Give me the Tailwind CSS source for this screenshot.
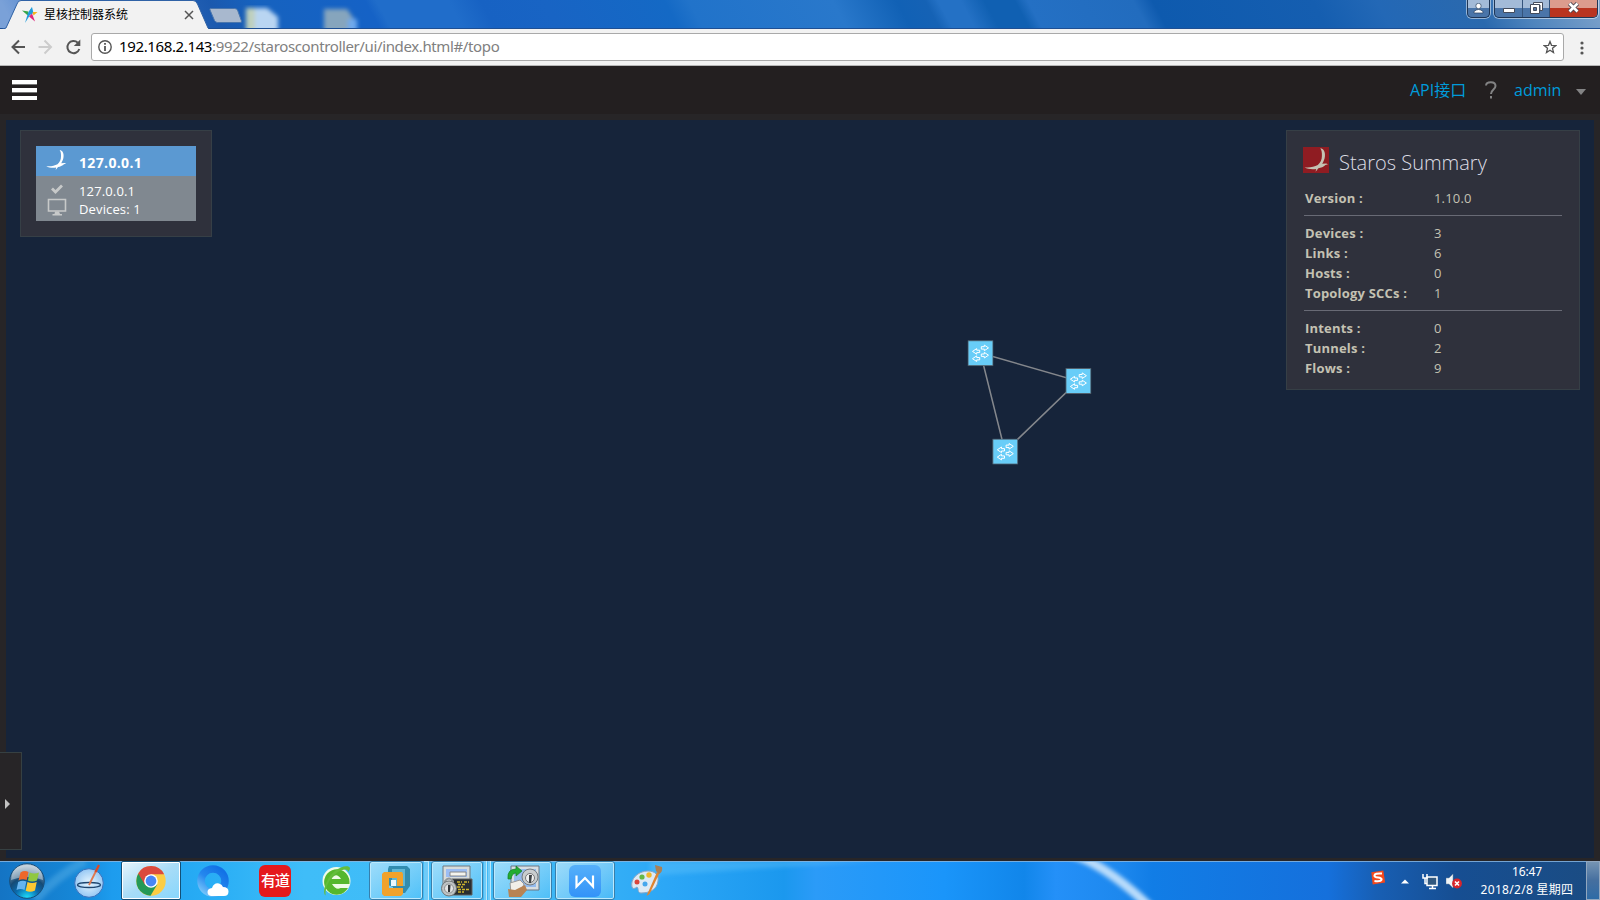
<!DOCTYPE html>
<html lang="zh-CN">
<head>
<meta charset="utf-8">
<title>星核控制器系统</title>
<script src="https://cdn.jsdelivr.net/npm/@tailwindcss/browser@4"></script>
</head>
<body class="w-[1600px] h-[900px] overflow-hidden flex flex-col bg-[#272526] font-['Open_Sans','Noto_Sans_CJK_SC',sans-serif]">
<svg class="hidden">
  <defs>
    <symbol id="bird" viewBox="0 0 26 26">
      <path d="M17.3 1.2C20.6 1.6 22.5 5 21.9 9.4C21.7 12 20.4 14.6 19.2 16.700L23.2 16.5L25 17.2L22.4 18.1C20.6 20 18 21 15.4 21.3L12.6 24.7L13.2 22C9 22.500 4.500 22.2 1.500 20.3C6.500 20.900 11 20 14.8 18.1C17.600 15.400 18.900 12.600 18.900 9C19.100 5.800 18.600 3 17.300 1.200Z"/>
    </symbol>
    <symbol id="switch" viewBox="0 0 26 26">
      <rect x=".5" y=".5" width="25" height="25" fill="#68cdf8" stroke="#515f6b"/>
      <g fill="none" stroke="#fff" stroke-width="1">
        <path d="M13.800 6.500H16.800V4.900L21 7.700L16.800 10.500V8.900H13.800Z"/>
        <path d="M13.800 13.800H16.800V12.200L21 15L16.800 17.800V16.200H13.800Z"/>
        <path d="M12.200 10H9.200V8.400L5 11.200L9.200 14V12.400H12.200Z"/>
        <path d="M12.200 17.300H9.200V15.700L5 18.500L9.200 21.300V19.700H12.200Z"/>
      </g>
    </symbol>
  </defs>
</svg>

<!-- tab strip -->
<header class="relative h-[29px] shrink-0 flex justify-between bg-linear-to-r from-[#6f9ad4] to-[#7a9fc9]">
  <svg class="absolute inset-0" width="1600" height="29">
    <defs>
      <linearGradient id="sky" gradientUnits="userSpaceOnUse" x1="0" y1="0" x2="1600" y2="0" gradientTransform="skewX(28)"><stop offset="0" stop-color="#7aa1d8"/><stop offset=".03" stop-color="#4c82cc"/><stop offset=".13" stop-color="#1b59ae"/><stop offset=".16" stop-color="#1662bf"/><stop offset=".228" stop-color="#1562c6"/><stop offset=".235" stop-color="#206dca"/><stop offset=".28" stop-color="#206dca"/><stop offset=".3" stop-color="#1762c3"/><stop offset=".34" stop-color="#1864c4"/><stop offset=".415" stop-color="#1469c5"/><stop offset=".43" stop-color="#2173ca"/><stop offset=".52" stop-color="#2978cb"/><stop offset=".56" stop-color="#1161b5"/><stop offset=".578" stop-color="#1562b5"/><stop offset=".586" stop-color="#2471c5"/><stop offset=".6" stop-color="#2471c5"/><stop offset=".615" stop-color="#1060b2"/><stop offset=".634" stop-color="#1060b2"/><stop offset=".642" stop-color="#2470c4"/><stop offset=".708" stop-color="#226cbe"/><stop offset=".72" stop-color="#0e5aae"/><stop offset=".82" stop-color="#155eb0"/><stop offset=".86" stop-color="#2368b6"/><stop offset=".92" stop-color="#2a69ae"/><stop offset=".95" stop-color="#4e84bd"/><stop offset="1" stop-color="#7da2cb"/></linearGradient>
      <filter id="soft"><feGaussianBlur stdDeviation="2"/></filter>
    </defs>
    <path d="M0 0H1600V29H0Z" fill="url(#sky)"/>
    <g filter="url(#soft)">
      <path d="M248 8H267L278 17V34H248Z" fill="#b9d5f2"/><path d="M246 8H255V34H246Z" fill="#bfd0bd"/>
      <path d="M324 9H347L354 19V34H324Z" fill="#86a5bd"/><path d="M348 19H357V34H348Z" fill="#6ea9ec"/>
    </g>
    <path d="M0 28.500H1600" stroke="#1e4f93"/>
    <path d="M0 30L6 28L17 4Q18 .5 21 .5H193Q196 .5 197.500 4L208 28L210 30Z" fill="#f2f2f2" stroke="#2f62a6"/>
    <path d="M209 8.500H233Q235 8.500 236 10L240 21Q240.500 22.500 238.500 22.500H216Q214 22.500 213 20.500L208.500 10Q208 8.500 209 8.500Z" transform="translate(1.500 0)" fill="#a8b8ce" stroke="#4a76ad"/>
  </svg>
  <div class="relative flex items-center h-[29px] pl-[22px] w-[208px]">
    <svg width="16" height="16" viewBox="0 0 16 16"><path d="M0 3.500L6.500 4.500L5.800 8.500Z" fill="#37a54a"/><path d="M10 0L7 4.500L6 10Z" fill="#21a9d8"/><path d="M10 0L11.500 6L8 8L3 16L6 6Z" fill="#1f9bdc"/><path d="M15.500 5L11.500 8.500L10.500 5Z" fill="#f6b31c"/><path d="M10 6.500L13 14.500L7 9.500Z" fill="#e0267e"/></svg>
    <span class="ml-[6px] text-[12px] leading-[16px] text-black w-[88px]">星核控制器系统</span>
    <svg class="ml-[52px] mt-px" width="10" height="10"><path d="M1 1L9 9M9 1L1 9" stroke="#555" stroke-width="1.500"/></svg>
  </div>
  <div class="relative flex gap-[4px] pr-[2px]">
    <div class="w-[23px] h-[18px] border border-t-0 border-[#1f3656] rounded-b-[5px] ring-1 ring-white/50 bg-linear-to-b from-[#a3bbd8] from-45% to-[#4a75a9] to-50% flex justify-center pt-[3px]">
      <svg width="11" height="11"><circle cx="5.500" cy="3" r="2.700" fill="#fff" stroke="#28405f" stroke-width=".7"/><path d="M1 10V8.500Q5.500 4.500 10 8.500V10Z" fill="#fff" stroke="#28405f" stroke-width=".7"/></svg>
    </div>
    <div class="flex h-[18px] border border-t-0 border-[#1f3656] rounded-b-[5px] ring-1 ring-white/50 overflow-hidden bg-linear-to-b from-[#a3bbd8] from-45% to-[#4a75a9] to-50%">
      <div class="w-[28px] border-r border-[#34547c] flex justify-center pt-[8px]"><svg width="12" height="5"><path d="M.5 .5H11.500V4.500H.5Z" fill="#fff" stroke="#444c5c"/></svg></div>
      <div class="w-[27px] border-r border-[#34547c] flex justify-center pt-[2px]"><svg width="13" height="12"><path d="M3.500 .5H12.500V8.500H10V3H3.500Z" fill="#fff" stroke="#444c5c"/><path d="M.5 2.500H9.500V11.500H.5Z" fill="#fff" stroke="#444c5c"/><path d="M3.500 5.500H6.500V8.500H3.500Z" fill="#5474a0" stroke="#444c5c"/></svg></div>
      <div class="w-[47px] bg-linear-to-b from-[#dc9c8e] from-45% to-[#b93420] to-50% flex justify-center pt-[2px]"><svg width="13" height="11"><path d="M2.500 1.500L10.500 9.500M10.500 1.500L2.500 9.500" stroke="#4a4652" stroke-width="4.400"/><path d="M2.500 1.500L10.500 9.500M10.500 1.500L2.500 9.500" stroke="#fff" stroke-width="2.600"/></svg></div>
    </div>
  </div>
</header>

<!-- address bar -->
<div class="h-[37px] shrink-0 bg-[#f2f2f2] border-b border-[#b6b6b6] flex items-center pl-[10px]">
  <svg class="shrink-0" width="71" height="18" viewBox="0 0 71 18" fill="none" stroke-width="2"><path d="M15 9H2.500M9 2.500L2.500 9L9 15.500" stroke="#555"/><path d="M28.500 9H41M34.500 2.500L41 9L34.500 15.500" stroke="#ccc"/><path d="M69.300 11A6.100 6.100 0 1 1 67.800 4.700" stroke="#555"/><path d="M70.300 1.500V8H63.800Z" fill="#555"/></svg>
  <div class="ml-[10px] w-[1473px] shrink-0 h-[28px] bg-white border border-[#a9a9a9] rounded-[3px] flex items-center pl-[6px] pr-[6px]">
    <svg width="14" height="14" fill="none"><circle cx="7" cy="7" r="6.200" stroke="#555" stroke-width="1.400"/><path d="M7 6V11M7 3V4.800" stroke="#555" stroke-width="1.800"/></svg>
    <span class="ml-[7px] -mt-[2px] text-[15px] leading-[24px] text-[#808080] font-['Noto_Sans'] whitespace-nowrap tracking-[-0.370px]"><span class="text-black">192.168.2.143</span>:9922/staroscontroller/ui/index.html#/topo</span>
    <svg class="ml-auto" width="14" height="14" fill="none" stroke="#555" stroke-width="1.300"><path d="M7 1.500L8.500 5.300L12.800 5.600L9.500 8.300L10.500 12.500L7 10.200L3.500 12.500L4.500 8.300L1.200 5.600L5.500 5.300Z"/></svg>
  </div>
  <svg class="ml-[16px] mt-px" width="4" height="14" fill="#555"><circle cx="2" cy="2" r="1.600"/><circle cx="2" cy="7" r="1.600"/><circle cx="2" cy="12" r="1.600"/></svg>
</div>

<!-- application masthead -->
<nav class="h-[48px] shrink-0 bg-[#231f20] flex items-center pl-[12px] pr-[14px]">
  <div class="w-[25px] h-[20px] flex flex-col justify-between">
    <i class="h-[4px] bg-white shadow-[0_1px_0_#777]"></i><i class="h-[4px] bg-white shadow-[0_1px_0_#777]"></i><i class="h-[4px] bg-white"></i>
  </div>
  <div class="ml-auto flex items-center text-[16px] leading-[24px] text-[#009bdb]">
    <span class="w-[56px] whitespace-nowrap">API接口</span>
    <svg class="ml-[19px]" width="12" height="18" fill="none" stroke="#838384" stroke-width="2"><path d="M1 4.500C1.500 0 10.500 0 10.500 5C10.500 8.500 6 8.500 6 13M6 15V17.500"/></svg>
    <span class="ml-[17px] w-[48px]">admin</span>
    <svg class="ml-[14px] mt-[3px]" width="10" height="6"><path d="M0 0H10L5 6Z" fill="#838384"/></svg>
  </div>
</nav>

<!-- topology view -->
<main class="relative flex-1 px-[6px] pt-[6px] pb-[3px] bg-[#272527]">
  <div class="relative h-full bg-[#16243a] flex justify-between items-start px-[14px] pt-[10px]">
    <svg class="absolute left-0 top-0" width="1588" height="738" viewBox="6 120 1588 738">
      <path d="M980.500 353L1078 381L1005 451.500Z" fill="none" stroke="#84878c" stroke-width="1.500"/>
      <use href="#switch" x="967.500" y="340.200" width="26" height="26"/>
      <use href="#switch" x="1065.400" y="368" width="26" height="26"/>
      <use href="#switch" x="992.300" y="438.600" width="26" height="26"/>
    </svg>
    <section class="relative w-[192px] h-[107px] bg-[#2f313c] border border-[#363f46] p-[15px]">
      <div class="h-[30px] bg-[#5b99d2] flex items-center pl-[9px]">
        <svg class="-mt-[3px]" width="22" height="22" fill="#fff"><use href="#bird" width="22" height="22"/></svg>
        <b class="ml-[12px] mt-[3px] text-[14px] leading-[20px] text-white tracking-[0.350px]">127.0.0.1</b>
      </div>
      <div class="h-[45px] bg-[#808890] flex pl-[11px] pt-[6px]">
        <svg width="20" height="36" fill="none"><path d="M5 6.500L8.500 10L15 3.500" stroke="#c7c9c9" stroke-width="2.800"/><path d="M1.500 17.500H18.500V29H1.500Z" stroke="#c7c9c9" stroke-width="1.600"/><path d="M8 29.500H12L13 32H15V33.500H5.500V32H7.500Z" fill="#c7c9c9"/></svg>
        <div class="ml-[12px] text-[13px] leading-[18px] text-white tracking-[0.140px]"><p>127.0.0.1</p><p>Devices: 1</p></div>
      </div>
    </section>
    <section class="relative w-[294px] h-[260px] bg-[#2f313c] border border-[#363f46] pl-[17px] pr-[17px] pt-[14px] text-[13px] leading-[20px] text-[#c4c2b3] tracking-[0.190px]">
      <div class="flex h-[38px]">
        <svg class="mt-[2px] -ml-px" width="26" height="26"><path d="M0 0H26V26H0Z" fill="#8f1c22"/><use href="#bird" width="26" height="26" fill="#c4c2b3"/></svg>
        <h2 class="ml-[10px] mt-[3px] text-[20px] leading-[30px] font-light text-[#dddde5] whitespace-nowrap tracking-normal">Staros Summary</h2>
      </div>
      <dl class="grid grid-cols-[129px_1fr] pl-px pt-[5px] h-[32px]"><dt class="font-bold">Version :</dt><dd>1.10.0</dd></dl>
      <hr class="border-[#686a75]">
      <dl class="grid grid-cols-[129px_1fr] pl-px pt-[7px] h-[94px] content-start"><dt class="font-bold">Devices :</dt><dd>3</dd><dt class="font-bold">Links :</dt><dd>6</dd><dt class="font-bold">Hosts :</dt><dd>0</dd><dt class="font-bold">Topology SCCs :</dt><dd>1</dd></dl>
      <hr class="border-[#686a75]">
      <dl class="grid grid-cols-[129px_1fr] pl-px pt-[7px]"><dt class="font-bold">Intents :</dt><dd>0</dd><dt class="font-bold">Tunnels :</dt><dd>2</dd><dt class="font-bold">Flows :</dt><dd>9</dd></dl>
    </section>
  </div>
  <div class="absolute left-0 top-[638px] w-[22px] h-[98px] bg-[#272527] border border-l-0 border-[#364042] flex items-center pl-[5px] pt-[6px]">
    <svg width="5" height="10"><path d="M0 0L5 5L0 10Z" fill="#c2c2c2"/></svg>
  </div>
</main>

<!-- desktop taskbar -->
<footer class="relative h-[39px] shrink-0 flex items-center text-white">
  <svg class="absolute inset-0" width="1600" height="39">
    <defs>
      <linearGradient id="tb"><stop offset="0" stop-color="#1474c4"/><stop offset=".05" stop-color="#1688d8"/><stop offset=".07" stop-color="#1d9cee"/><stop offset=".13" stop-color="#28adf5"/><stop offset=".19" stop-color="#3fbdf8"/><stop offset=".33" stop-color="#40baf6"/><stop offset=".42" stop-color="#2ba6f6"/><stop offset=".49" stop-color="#1b98ee"/><stop offset=".51" stop-color="#2b9bf8"/><stop offset=".59" stop-color="#1a95fa"/><stop offset=".64" stop-color="#1186ea"/><stop offset=".66" stop-color="#2490f8"/><stop offset=".7" stop-color="#1d88ee"/><stop offset=".72" stop-color="#117de6"/><stop offset=".83" stop-color="#1570dc"/><stop offset=".86" stop-color="#185fb4"/><stop offset=".91" stop-color="#164e92"/><stop offset="1" stop-color="#1b4c82"/></linearGradient>
      <radialGradient id="orb" cx=".5" cy="1" r="1"><stop offset="0" stop-color="#1ee4ff"/><stop offset=".35" stop-color="#0a6caf"/><stop offset=".6" stop-color="#154b76"/><stop offset="1" stop-color="#b8c9d6"/></radialGradient>
      <radialGradient id="glass"><stop offset="0" stop-color="#e8f7ff"/><stop offset="1" stop-color="#97c8f4"/></radialGradient>
      <linearGradient id="ring" x1="0" y1="1" x2=".8" y2="0"><stop offset="0" stop-color="#7cc9fb"/><stop offset=".5" stop-color="#2487ee"/><stop offset="1" stop-color="#1272e6"/></linearGradient>
      <linearGradient id="wps" x2="0" y2="1"><stop offset="0" stop-color="#55b0fa"/><stop offset="1" stop-color="#3393f8"/></linearGradient>
    </defs>
    <path d="M0 0H1600V39H0Z" fill="url(#tb)"/>
    <path d="M650 30L660 14L880 0H650Z" fill="#64c4fb" opacity=".4" filter="url(#soft)"/>
    <path d="M35 39Q55 16 85 0" fill="none" stroke="#70c0ee" stroke-width="9" opacity=".35" filter="url(#soft)"/>
    <path d="M1068 -8Q1104 2 1150 46" fill="none" stroke="#b9dcfb" stroke-width="9" filter="url(#soft)"/>
    <path d="M0 .5H1600" stroke="#86b4df" opacity=".85"/>
  </svg>
  <div class="relative flex items-center w-[58px] pl-[9px]">
    <svg width="36" height="36"><circle cx="18" cy="18" r="17.300" fill="url(#orb)" stroke="#174d79"/><path d="M2 17Q3 2 18 2T34 17Q18 11 2 17Z" fill="#fff" opacity=".4"/><path d="M11.500 9.500Q15.500 7 19.500 9L17.700 17Q13.500 15.500 9.500 17.500Z" fill="#ed672b"/><path d="M20.700 9.500Q25 11.500 30 9.500L28 17.500Q23 19.500 18.900 17.500Z" fill="#90c840"/><path d="M9.200 19Q13.500 17 17.400 18.500L15.500 27Q11.500 25 7.500 27Z" fill="#66b4ef"/><path d="M18.500 19Q23 21 27.700 19L26 27.500Q21 30 16.700 27.700Z" fill="#fdc832"/></svg>
  </div>
  <div class="relative flex items-center h-[39px]">
    <div class="w-[62px] flex justify-center"><svg width="34" height="36"><circle cx="17" cy="20" r="14.300" fill="url(#glass)" stroke="#3d73bd"/><ellipse cx="17" cy="22" rx="11.500" ry="2.500" fill="none" stroke="#1e466f" stroke-width="1.300"/><path d="M26.500 3L17 22" stroke="#df7950" stroke-width="1.800"/><path d="M27 2L23.500 9" stroke="#d94a28" stroke-width="2.200"/></svg></div>
    <div class="w-[62px] h-[39px] flex pl-px"><div class="w-[60px] h-[39px] border border-[#135077] rounded-[2px] bg-linear-to-br from-[#e6f5fc] via-[#a7dcf7] to-[#86d6fc] shadow-[inset_0_0_0_1px_#fff] flex items-center justify-center">
      <svg width="30" height="30" viewBox="0 0 30 30"><circle cx="15" cy="15" r="14.700" fill="#fbcd44"/><path d="M15 15L2.200 7.800A14.700 14.700 0 0 0 14.500 29.700L21.200 18.500Z" fill="#239957"/><path d="M15 8.200H28.100A14.700 14.700 0 0 0 2.200 7.500L8.800 18.500Z" fill="#db4a3d"/><circle cx="15" cy="15" r="6.800" fill="#fff"/><circle cx="15" cy="15" r="5.400" fill="#4786f4"/></svg></div></div>
    <div class="w-[62px] flex justify-center"><svg width="32" height="32"><circle cx="16" cy="16" r="12" fill="none" stroke="url(#ring)" stroke-width="7.500"/><path d="M14 31Q10.500 30.500 10.500 27T15 23Q17 17.500 22 18.500Q25 19 26 22Q31.500 22 31.500 26.500Q31.500 31 27 31Z" fill="#fff"/></svg></div>
    <div class="w-[62px] flex justify-center"><div class="w-[32px] h-[32px] rounded-[6px] bg-[#e5191c] text-[15px] leading-[31px] font-medium tracking-[-1px] text-center whitespace-nowrap">有道</div></div>
    <div class="w-[62px] flex justify-center"><svg width="32" height="32"><circle cx="15.500" cy="16" r="14" fill="#eefbe9"/><path d="M28.500 16.500A12.700 12.700 0 1 0 27 23H19.500Q15 25.500 11 19H28.500ZM10.500 14Q15 6.500 20 14Z" fill="#55b72e" fill-rule="evenodd"/><path d="M4.500 30.500C1 27 5 13 14 6C20 1 28 0 29 3C29 5 27.500 6.500 27 7C27 3.500 22 4 17 7C8 13 4 23 4.500 30.500Z" fill="#64bd3d"/></svg></div>
    <div class="w-[62px] flex justify-center gap-px">
      <div class="w-[54px] h-[39px] border border-[#377fac] rounded-[3px] bg-linear-to-br from-[#b7e5fb]/80 to-[#63c9fa]/40 shadow-[inset_0_0_0_1px_#bce9fd] flex items-center justify-center"><svg width="30" height="32"><path d="M8 1H26L29 4V21L24 28H12V22L7 20V4Z" fill="#318caf"/><path d="M11 4H24V21H11Z" fill="#5fb7d4"/><path d="M3 7H21L22 9V21H16V13H8V23H22V29L20 31H3L1 29V9Z" fill="#f0a22c"/><path d="M10 15H15V21H10Z" fill="#e9f7fd"/></svg></div>
      <div class="w-[5px] h-[39px] border-r border-t border-[#b9e8fc] bg-[#90d5f8]/60"></div>
    </div>
    <div class="w-[62px] flex pl-px gap-px">
      <div class="w-[52px] h-[39px] border border-[#377fac] rounded-[3px] bg-linear-to-br from-[#b7e5fb]/80 to-[#63c9fa]/40 shadow-[inset_0_0_0_1px_#bce9fd] flex items-center justify-center"><svg width="32" height="32"><path d="M2 1H29V25H2Z" fill="#d7dcdb" stroke="#6e7880"/><path d="M5 4H26V12H5Z" fill="#9bbdf3"/><path d="M9 7H25V11H9Z" fill="#f4f4ee" stroke="#888"/><path d="M11 14H31V30H11Z" fill="#292d30" stroke="#606260"/><path d="M16 17H21M23 17H28M17 19.500H25M16 22H22M17 24.500H28M17 27H23" stroke="#cdb52e" stroke-width="1.300" stroke-dasharray="3 1"/><path d="M4 19V16Q8 11 12 16V18" fill="none" stroke="#929799" stroke-width="2"/><circle cx="8" cy="23.500" r="7.500" fill="#bec3c4" stroke="#6f7576"/><circle cx="8" cy="23.500" r="4.500" fill="#e3e5e5" stroke="#8a8f90"/><path d="M7 20H9.500L9 27H7Z" fill="#303437"/></svg></div>
      <div class="w-[3px] h-[39px] border-r border-[#b9e8fc] bg-[#90d5f8]/60"></div><div class="w-[3px] h-[39px] border-r border-[#b9e8fc] bg-[#90d5f8]/60"></div>
    </div>
    <div class="w-[62px] flex pl-px"><div class="w-[59px] h-[39px] border border-[#377fac] rounded-[3px] bg-linear-to-br from-[#b7e5fb]/80 to-[#63c9fa]/40 shadow-[inset_0_0_0_1px_#bce9fd] flex items-center justify-center"><svg width="34" height="34"><path d="M5 2H33V26H5Z" fill="#d7dee2" stroke="#6b7683"/><path d="M8 5H30V23H8Z" fill="#94bbee"/><path d="M2 15Q1 5 10 5V2L16 7L10 12V9Q6 9 5 15Z" fill="#22ad31" stroke="#177d26" stroke-width=".7"/><circle cx="24" cy="13" r="8" fill="#c9cdcf" stroke="#747b80"/><circle cx="24" cy="14" r="4.500" fill="#eff0f0" stroke="#777"/><path d="M23 11H26L25 19H23Z" fill="#3e4245"/><path d="M4 19L14 16L18 20L15 27L5 29Z" fill="#f1eee9" stroke="#999"/><path d="M2 25L9 26L19 21L21 26L15 33H3Z" fill="#b88354"/></svg></div></div>
    <div class="w-[62px] flex pl-px"><div class="w-[60px] h-[39px] border border-[#377fac] rounded-[3px] bg-linear-to-br from-[#b7e5fb]/80 to-[#63c9fa]/40 shadow-[inset_0_0_0_1px_#bce9fd] flex items-center justify-center"><svg width="32" height="32"><rect width="32" height="32" rx="6" fill="url(#wps)"/><path d="M7.500 10.500V21.500L16 13L24 21.500V10.500" fill="none" stroke="#fff" stroke-width="2.200"/></svg></div></div>
    <div class="w-[62px] flex justify-center"><svg width="34" height="34"><path d="M2 23C0 15 8 7 18 7C25 7 29 11 28 17C27 26 19 29 11 29C7 29 9 24 7 23Q3 26 2 23Z" fill="#ddeaf5" stroke="#89a6c4"/><circle cx="7" cy="18" r="2.500" fill="#da463c"/><circle cx="12" cy="13" r="2.600" fill="#65b847"/><circle cx="19" cy="11" r="2.700" fill="#f1b82c"/><circle cx="15" cy="20" r="2.500" fill="#45a7ed"/><path d="M27 8L16.500 32L19.500 30L29.500 9Z" fill="#df8430"/><path d="M25 1L32 3Q33 8 29 10L26 7Z" fill="#aa8056"/></svg></div>
  </div>
  <div class="relative ml-auto flex items-center h-[39px]">
    <svg class="-mt-[6px]" width="16" height="17" viewBox="0 0 18 18"><path d="M1.500 3L15 1L17 14.500L3 17Z" fill="#f4481c"/><path d="M13.500 4.500Q5 4 5 7Q5 8.500 9 9Q13.500 9.500 13 11.500Q12 14 5 13" fill="none" stroke="#fff" stroke-width="2.300"/></svg>
    <svg class="ml-[15px] mt-px" width="8" height="5"><path d="M0 4.500L4 .5L8 4.500Z" fill="#fff"/></svg>
    <svg class="ml-[13px] mt-[1px]" width="16" height="17" fill="none"><path d="M5 4H15V12.500H5Z" fill="#31587f" stroke="#fff" stroke-width="1.500"/><path d="M7 15.500H14M10.500 13V15" stroke="#fff" stroke-width="1.500"/><path d="M1 1V5H5V1M3 5V10.500H5" stroke="#fff" stroke-width="1.500"/></svg>
    <svg class="ml-[8px] mt-[1px]" width="17" height="17"><path d="M0 5H3L7 1V15L3 11H0Z" fill="#f0f4f7" stroke="#738aa2" stroke-width=".5"/><circle cx="11" cy="10.500" r="4.900" fill="#d9252b"/><path d="M9 8.500L13 12.500M13 8.500L9 12.500" stroke="#fff" stroke-width="1.600"/></svg>
    <div class="ml-[16px] w-[96px] text-center text-[12px] leading-[18px] whitespace-nowrap font-['Noto_Sans','Noto_Sans_CJK_SC',sans-serif]"><p class="tracking-[-0.100px]">16:47</p><p class="tracking-[0.300px]">2018/2/8 星期四</p></div>
    <div class="ml-[11px] w-[14px] h-[39px] border border-[#91a7bf] bg-linear-to-b from-[#7594b3] via-[#456f9f] to-[#2d6ba6]"></div>
  </div>
</footer>
</body>
</html>
